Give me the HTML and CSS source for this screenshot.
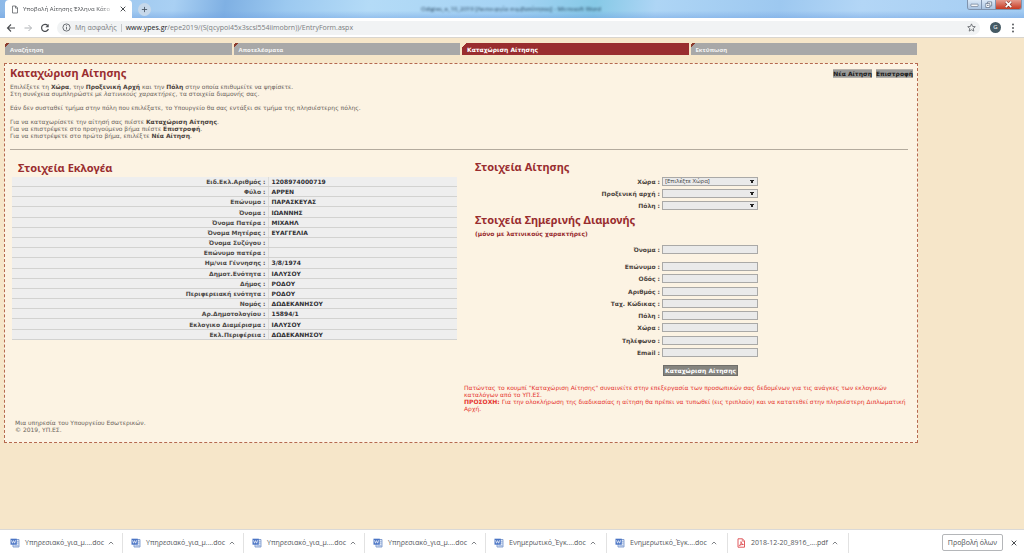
FILE: index.html
```html
<!DOCTYPE html>
<html lang="el">
<head>
<meta charset="utf-8">
<title>Υποβολή Αίτησης Έλληνα Κάτοικου Εξωτερικού</title>
<link rel="stylesheet" href="styles.css">
</head>
<body>
<svg width="0" height="0" class="defs" aria-hidden="true">
  <symbol id="word" viewBox="0 0 10 10"><path d="M3 1.500h6v7.500H3z" fill="#dfe8f7" stroke="#6f8fc8" stroke-width=".8"/><path d="M7.300 3.500h1.200M7.300 5.200h1.200M4.500 7.800h4" stroke="#6f8fc8" stroke-width=".6"/><path d="M.5.700h6.300v6H.5z" fill="#4a74c4"/><path d="M1.500 2.200l1 3 1.100-2.600 1.100 2.600 1-3" fill="none" stroke="#fff" stroke-width=".7"/></symbol>
  <symbol id="pdf" viewBox="0 0 10 10"><path d="M2 .8h4.500L8.500 3v6.200H2z" fill="#fff" stroke="#e05a5e"/><path d="M6.300.8v2.400h2.200" fill="none" stroke="#e05a5e" stroke-width=".7"/><path d="M3.300 7.500C5 6.200 5.200 4.800 5 3.600c.3 2 1.200 2.700 2.400 2.900-1.700-.1-2.900.3-4.100 1z" fill="none" stroke="#d9363b" stroke-width=".8"/></symbol>
  <symbol id="up" viewBox="0 0 6 6"><path d="M.8 4.200 3 2l2.200 2.200" fill="none" stroke="#5f6368" stroke-width=".8"/></symbol>
  <symbol id="close" viewBox="0 0 6 6"><path d="M.7.700l4.600 4.600M5.300.700.700 5.300" fill="none" stroke="#4a4d51" stroke-width="1"/></symbol>
</svg>
<div class="browser">
  <header class="titlebar">
    <div class="tab">
      <svg class="tab-file" viewBox="0 0 8 9"><path d="M1.500 1h3.200l1.800 1.900V8h-5zM4.500 1v2.100h2" fill="none" stroke="#5f6368" stroke-width=".8"/></svg>
      <span class="tab-title">Υποβολή Αίτησης Έλληνα Κάτο</span>
      <button class="plain" aria-label="Κλείσιμο καρτέλας"><svg class="i6"><use href="#close"/></svg></button>
    </div>
    <button class="new-tab" aria-label="Νέα καρτέλα"><svg viewBox="0 0 8 8"><path d="M4 1v6M1 4h6" stroke="#4a5866"/></svg></button>
    <span class="behind">Odigies_e_10_2019 [Λειτουργία συμβατότητας] - Microsoft Word</span>
    <div class="win">
      <button aria-label="Ελαχιστοποίηση"><svg viewBox="0 0 10 8"><rect x="1" y="3.500" width="8" height="2.500" rx=".5" fill="#fff" stroke="#5b6b82" stroke-width=".7"/></svg></button>
      <button aria-label="Επαναφορά"><svg viewBox="0 0 10 8"><path d="M4 1h4.500v4.500H4z" fill="#fff" stroke="#5b6b82" stroke-width=".8"/><path d="M2 2.700h4.500v4.500H2z" fill="#fff" stroke="#5b6b82" stroke-width=".8"/><path d="M3.600 4.200h1.400v1.400H3.600z" fill="#5b6b82"/></svg></button>
      <button class="win-close" aria-label="Κλείσιμο"><svg viewBox="0 0 10 8"><path d="M2.500 1.500l5 5M7.500 1.500l-5 5" stroke="#7a2a20" stroke-width="2.600"/><path d="M2.500 1.500l5 5M7.500 1.500l-5 5" stroke="#fff" stroke-width="1.600"/></svg></button>
    </div>
  </header>
  <div class="toolbar">
    <button class="plain" aria-label="Πίσω"><svg class="i10" viewBox="0 0 10 10"><path d="M9 5H1.500M5 1.500 1.500 5 5 8.500" fill="none" stroke="#4a4d51" stroke-width="1.100"/></svg></button>
    <button class="plain" aria-label="Εμπρός"><svg class="i10" viewBox="0 0 10 10"><path d="M1.500 5H8.500M5.500 2 8.500 5 5.500 8" fill="none" stroke="#b0b3b7" stroke-width="1"/></svg></button>
    <button class="plain" aria-label="Ανανέωση"><svg class="i10" viewBox="0 0 10 10"><path d="M7.700 2.500A3.500 3.500 0 1 0 8.400 6" fill="none" stroke="#4a4d51" stroke-width="1.200"/><path d="M8.700 1v3.300H5.400z" fill="#4a4d51"/></svg></button>
    <div class="omnibox">
      <svg class="i9" viewBox="0 0 10 10"><circle cx="5" cy="5" r="4" fill="none" stroke="#5f6368"/><path d="M5 4.300v3M5 2.500v1" stroke="#5f6368"/></svg>
      <span class="insecure">Μη ασφαλής</span>
      <span class="url"><b>www.ypes.gr</b>/epe2019/(S(qcypoi45x3scsl554iimobrn))/EntryForm.aspx</span>
      <svg class="i9" viewBox="0 0 10 10"><path d="M5 1l1.200 2.800 3 .3-2.300 2 .7 2.900L5 7.500 2.400 9l.7-2.900-2.300-2 3-.3z" fill="none" stroke="#5f6368" stroke-width=".9"/></svg>
    </div>
    <span class="avatar">G</span>
    <button class="plain" aria-label="Μενού"><svg class="i10" viewBox="0 0 10 10"><g fill="#4a4d51"><circle cx="5" cy="1.500" r=".9"/><circle cx="5" cy="5" r=".9"/><circle cx="5" cy="8.500" r=".9"/></g></svg></button>
  </div>

  <main class="page">
    <nav class="steps">
      <a href="#">Αναζήτηση</a>
      <a href="#">Αποτελέσματα</a>
      <a href="#" class="active">Καταχώριση Αίτησης</a>
      <a href="#">Εκτύπωση</a>
    </nav>
    <section class="panel">
      <div class="head">
        <h1>Καταχώριση Αίτησης</h1>
        <div class="actions"><button>Νέα Αίτηση</button><button>Επιστροφή</button></div>
      </div>
      <div class="intro">
        <p>Επιλέξετε τη <b>Χώρα</b>, την <b>Προξενική Αρχή</b> και την <b>Πόλη</b> στην οποία επιθυμείτε να ψηφίσετε.<br>Στη συνέχεια συμπληρώστε με <i>λατινικούς χαρακτήρες</i>, τα στοιχεία διαμονής σας.</p>
        <p>Εάν δεν συσταθεί τμήμα στην πόλη που επιλέξατε, το Υπουργείο θα σας εντάξει σε τμήμα της πλησιέστερης πόλης.</p>
        <p>Για να καταχωρίσετε την αίτησή σας πιέστε <b>Καταχώριση Αίτησης</b>.<br>Για να επιστρέψετε στο προηγούμενο βήμα πιέστε <b>Επιστροφή</b>.<br>Για να επιστρέψετε στο πρώτο βήμα, επιλέξτε <b>Νέα Αίτηση</b>.</p>
      </div>
      <hr>
      <div class="columns">
        <div class="voter">
          <h2>Στοιχεία Εκλογέα</h2>
          <table>
            <tr><th scope="row">Ειδ.Εκλ.Αριθμός :</th><td>1208974000719</td></tr>
            <tr><th scope="row">Φύλο :</th><td>ΑΡΡΕΝ</td></tr>
            <tr><th scope="row">Επώνυμο :</th><td>ΠΑΡΑΣΚΕΥΑΣ</td></tr>
            <tr><th scope="row">Όνομα :</th><td>ΙΩΑΝΝΗΣ</td></tr>
            <tr><th scope="row">Όνομα Πατέρα :</th><td>ΜΙΧΑΗΛ</td></tr>
            <tr><th scope="row">Όνομα Μητέρας :</th><td>ΕΥΑΓΓΕΛΙΑ</td></tr>
            <tr><th scope="row">Όνομα Συζύγου :</th><td></td></tr>
            <tr><th scope="row">Επώνυμο πατέρα :</th><td></td></tr>
            <tr><th scope="row">Ημ/νια Γέννησης :</th><td>3/8/1974</td></tr>
            <tr><th scope="row">Δημοτ.Ενότητα :</th><td>ΙΑΛΥΣΟΥ</td></tr>
            <tr><th scope="row">Δήμος :</th><td>ΡΟΔΟΥ</td></tr>
            <tr><th scope="row">Περιφερειακή ενότητα :</th><td>ΡΟΔΟΥ</td></tr>
            <tr><th scope="row">Νομός :</th><td>ΔΩΔΕΚΑΝΗΣΟΥ</td></tr>
            <tr><th scope="row">Αρ.Δημοτολογίου :</th><td>15894/1</td></tr>
            <tr><th scope="row">Εκλογικο Διαμέρισμα :</th><td>ΙΑΛΥΣΟΥ</td></tr>
            <tr><th scope="row">Εκλ.Περιφέρεια :</th><td>ΔΩΔΕΚΑΝΗΣΟΥ</td></tr>
          </table>
        </div>
        <form class="application">
          <h2>Στοιχεία Αίτησης</h2>
          <div class="fields choices">
            <div class="field"><label for="country">Χώρα :</label><select id="country"><option>[Επιλέξτε Χώρα]</option></select></div>
            <div class="field"><label for="consulate">Προξενική αρχή :</label><select id="consulate"><option></option></select></div>
            <div class="field"><label for="city">Πόλη :</label><select id="city"><option></option></select></div>
          </div>
          <h2 class="second">Στοιχεία Σημερινής Διαμονής</h2>
          <p class="hint">(μόνο με λατινικούς χαρακτήρες)</p>
          <div class="field first-name"><label for="fname">Όνομα :</label><input id="fname"></div>
          <div class="fields address">
            <div class="field"><label for="lname">Επώνυμο :</label><input id="lname"></div>
            <div class="field"><label for="street">Οδός :</label><input id="street"></div>
            <div class="field"><label for="num">Αριθμός :</label><input id="num"></div>
            <div class="field"><label for="zip">Ταχ. Κώδικας :</label><input id="zip"></div>
            <div class="field"><label for="town">Πόλη :</label><input id="town"></div>
            <div class="field"><label for="land">Χώρα :</label><input id="land"></div>
            <div class="field"><label for="phone">Τηλέφωνο :</label><input id="phone"></div>
            <div class="field"><label for="email">Email :</label><input id="email" type="email"></div>
          </div>
          <div class="submit"><button type="button">Καταχώριση Αίτησης</button></div>
          <p class="warning">Πατώντας το κουμπί "Καταχώριση Αίτησης" συναινείτε στην επεξεργασία των προσωπικών σας δεδομένων για τις ανάγκες των εκλογικών καταλόγων από το ΥΠ.ΕΣ.<br><b>ΠΡΟΣΟΧΗ:</b> Για την ολοκλήρωση της διαδικασίας η αίτηση θα πρέπει να τυπωθεί (εις τριπλούν) και να κατατεθεί στην πλησιέστερη Διπλωματική Αρχή.</p>
        </form>
      </div>
      <footer>Μια υπηρεσία του Υπουργείου Εσωτερικών.<br>© 2019, ΥΠ.ΕΣ.</footer>
    </section>
  </main>

  <div class="downloads">
    <div class="file"><svg class="i10"><use href="#word"/></svg><span>Υπηρεσιακό_για_μ....doc</span><button class="plain" aria-label="Επιλογές"><svg class="i7"><use href="#up"/></svg></button></div>
    <div class="file"><svg class="i10"><use href="#word"/></svg><span>Υπηρεσιακό_για_μ....doc</span><button class="plain" aria-label="Επιλογές"><svg class="i7"><use href="#up"/></svg></button></div>
    <div class="file"><svg class="i10"><use href="#word"/></svg><span>Υπηρεσιακό_για_μ....doc</span><button class="plain" aria-label="Επιλογές"><svg class="i7"><use href="#up"/></svg></button></div>
    <div class="file"><svg class="i10"><use href="#word"/></svg><span>Υπηρεσιακό_για_μ....doc</span><button class="plain" aria-label="Επιλογές"><svg class="i7"><use href="#up"/></svg></button></div>
    <div class="file"><svg class="i10"><use href="#word"/></svg><span>Ενημερωτικό_Έγκ....doc</span><button class="plain" aria-label="Επιλογές"><svg class="i7"><use href="#up"/></svg></button></div>
    <div class="file"><svg class="i10"><use href="#word"/></svg><span>Ενημερωτικό_Έγκ....doc</span><button class="plain" aria-label="Επιλογές"><svg class="i7"><use href="#up"/></svg></button></div>
    <div class="file"><svg class="i10"><use href="#pdf"/></svg><span>2018-12-20_8916_....pdf</span><button class="plain" aria-label="Επιλογές"><svg class="i7"><use href="#up"/></svg></button></div>
    <button class="show-all">Προβολή όλων</button>
    <button class="plain" aria-label="Κλείσιμο"><svg class="i6"><use href="#close"/></svg></button>
  </div>
</div>
</body>
</html>
```
FILE: styles.css
```css
* { box-sizing: border-box; }
body { margin: 0; font-family: "DejaVu Sans", sans-serif; font-size: 6px; line-height: 7px; color: #6b645c; }
button, input, select { font: inherit; margin: 0; }
h1, h2, p { margin: 0; }
svg { display: block; }
.defs { position: absolute; }
.browser { display: flex; flex-direction: column; min-height: 100vh; }
.plain { border: 0; padding: 0; background: none; display: flex; }
.i6 { width: 6px; height: 6px; }
.i7 { width: 6px; height: 6px; }
.i9 { width: 9px; height: 9px; flex: none; }
.i10 { width: 10px; height: 10px; flex: none; }

/* Window frame */
.titlebar {
  display: flex; align-items: flex-end; height: 18px; padding-left: 5px;
  background:
    linear-gradient(transparent 60%, rgba(110, 160, 225, .45)),
    linear-gradient(100deg, #8db9e8 0, #a9d0f3 17%, #7fb0e3 22%, #9cc9f0 28%, #b4dbf7 36%, #a5d3f4 50%, #86c9e6 58%, #aed5f5 64%, #9dc8f0 76%, #b3d6f6 84%, #a3ccf2 100%);
  font-family: "Open Sans", sans-serif;
}
.tab { display: flex; align-items: center; gap: 4px; width: 127px; height: 18px; padding: 0 6px; background: #fff; border-radius: 4px 4px 0 0; }
.tab-file { width: 8px; height: 9px; flex: none; }
.tab-title { flex: 1; white-space: nowrap; font-size: 6px; line-height: 10px; color: #4a4d51; -webkit-mask-image: linear-gradient(90deg, #000 82%, transparent); }
.new-tab { align-self: center; margin-left: 6px; width: 13px; height: 13px; padding: 3px; border: 0; border-radius: 50%; background: #c6d8ea; }
.behind { align-self: center; margin-left: 270px; font-size: 6px; line-height: 10px; color: #1d3a55; filter: blur(1px); white-space: nowrap; }
.win { display: flex; align-self: flex-start; margin: 0 2px 0 auto; border: 1px solid #7f93ad; border-top: 0; border-radius: 0 0 3px 3px; overflow: hidden; }
.win button { width: 14px; height: 9px; padding: 0 2px; border: 0; border-right: 1px solid #7f93ad; background: linear-gradient(#dce9f7, #a9c3e0); }
.win .win-close { width: 25px; padding: 0 7px; border-right: 0; background: linear-gradient(#e59a8c, #c73a22); }

.toolbar { display: flex; align-items: center; gap: 7px; height: 20px; padding: 0 6px; background: #fff; border-bottom: 1px solid #d8d5cf; font-family: "Open Sans", sans-serif; }
.omnibox { flex: 1; display: flex; align-items: center; height: 14px; padding: 0 4px 0 5px; border-radius: 7px; background: #f1f3f4; font-size: 7px; line-height: 12px; color: #7a7d81; }
.insecure { margin: 0 4px; padding-right: 4px; border-right: 1px solid #c4c7ca; line-height: 8px; }
.url { flex: 1; white-space: nowrap; }
.url b { font-weight: 400; color: #202124; }
.avatar { width: 11px; height: 11px; margin-left: 3px; border-radius: 50%; background: #455a64; color: #fff; font-size: 6px; line-height: 11px; text-align: center; }

/* Page */
.page { flex: 1; padding: 5px 106px 5px 4px; background: #f6e6c9; }
.steps { display: grid; grid-template-columns: repeat(4, 1fr); gap: 2px; padding: 0 1px; }
.steps a { height: 12px; padding: 0 5px; background: linear-gradient(135deg, #f6e6c9 1px, #8c3a2c 1px, #8c3a2c 3px, #a8a8a8 3px); color: #f5f5f5; font-family: "Open Sans", sans-serif; font-weight: 700; font-size: 6px; line-height: 14px; text-decoration: none; }
.steps .active { background: linear-gradient(135deg, #f6e6c9 3px, #992d2f 3px); color: #fff; font-family: "DejaVu Sans", sans-serif; }
.panel { margin-top: 8px; padding: 3px 9px 9px 5px; border: 1px dashed #b5694f; background: #fcf3e3; }
.head { display: flex; justify-content: space-between; align-items: flex-start; margin-right: -5px; }
h1, h2 { color: #992d2f; font-family: "Noto Sans", sans-serif; font-weight: 700; font-size: 11px; line-height: 12px; }
.actions { display: flex; gap: 4px; padding-top: 2px; }
.actions button { height: 9px; padding: 0; border: 1px solid #b5b1aa; border-width: 1px 0; background: #9a9a98; color: #1c1c1c; font-weight: 700; line-height: 7px; }
.intro { padding-top: 4px; }
.intro p + p { margin-top: 7px; }
.intro b { color: #4b443e; }
hr { margin: 10px 0 0; border: 0; border-top: 1px solid #b3aa9d; }
.columns { display: grid; grid-template-columns: 451px 1fr; padding-left: 2px; }
.voter { padding: 12px 6px 0 0; }
.voter h2 { padding-left: 6px; }
table { width: 100%; height: 163px; margin-top: 3px; border-collapse: collapse; background: #eee; font-weight: 700; }
th, td { padding: 0; border-bottom: 1px solid #d2d2d0; line-height: 7px; }
th { width: 256px; padding-right: 2px; border-right: 1px solid #dcdcda; text-align: right; color: #4c4946; }
td { padding-left: 3px; color: #2e2e33; }
.application { padding-top: 11px; }
.application h2 { padding-left: 12px; }
.fields { display: flex; flex-direction: column; justify-content: space-between; }
.choices { height: 33px; margin-top: 4px; }
.address { height: 95px; margin-top: 8px; }
.field { display: grid; grid-template-columns: 197px 96px; column-gap: 2px; align-items: center; }
.field label { text-align: right; font-weight: 700; color: #4b443e; }
.field input, .field select { width: 96px; height: 9px; padding: 0 2px; border: 1px solid #aaa9a7; border-radius: 0; background: #eaeaea; color: #444; line-height: 7px; }
.field select {
  appearance: none; font-family: "Open Sans", sans-serif;
  background: #eaeaea conic-gradient(from -30deg at 50% 100%, #222 60deg, transparent 0) no-repeat right 3px center / 4px 4px;
}
.application .second { margin-top: 4px; }
.hint { padding: 4px 0 0 12px; color: #992d2f; font-weight: 700; }
.first-name { margin-top: 8px; }
.submit { margin-top: 8px; padding-left: 200px; }
.submit button { display: block; height: 11px; padding: 0 1px; border: 1px solid #6f6e6a; background: #85847f; color: #fff; font-weight: 700; line-height: 9px; }
.warning { margin-right: -5px; padding: 8px 0 0 1px; color: #e5342f; }
footer { padding: 7px 0 0 5px; }

/* Download shelf */
.downloads { display: flex; align-items: center; height: 26px; padding: 0 7px 0 2px; border-top: 1px solid #dad9d7; background: #fff; font-family: "Open Sans", sans-serif; font-size: 7px; line-height: 10px; color: #55585c; }
.file { display: flex; align-items: center; width: 121px; height: 20px; padding: 0 8px; border-right: 1px solid #e2e2e2; white-space: nowrap; }
.file span { margin: 0 4px 0 5px; }
.show-all { margin: 0 8px 0 auto; height: 17px; padding: 0 5px; border: 1px solid #b4b6b9; border-radius: 2px; background: #fff; color: #4a4d51; }
```
